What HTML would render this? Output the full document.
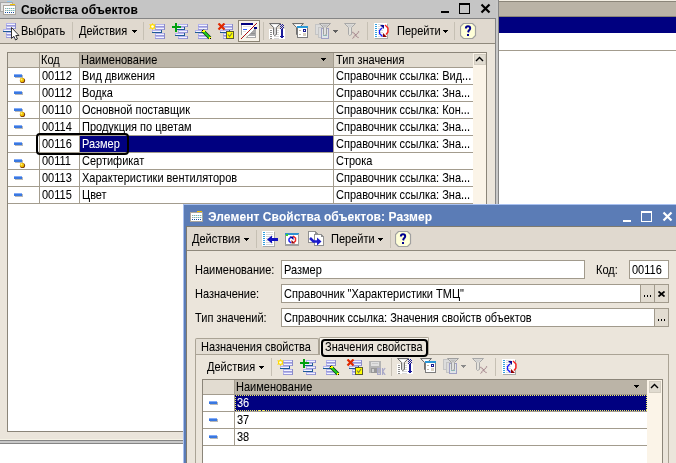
<!DOCTYPE html>
<html><head><meta charset="utf-8"><style>
html,body{margin:0;padding:0;width:676px;height:463px;overflow:hidden;background:#fff}
div{position:absolute;box-sizing:border-box}
.t{white-space:pre;will-change:transform;-webkit-text-stroke:0.05px currentColor}
</style></head><body>
<div style="left:0px;top:0px;width:676px;height:463px;background:#ffffff;"></div>
<div style="left:499px;top:0px;width:177px;height:1px;background:#f3eee3;"></div>
<div style="left:499px;top:1px;width:177px;height:1px;background:#8b8579;"></div>
<div style="left:499px;top:2px;width:177px;height:14px;background:#bab3a6;"></div>
<div style="left:499px;top:16px;width:177px;height:1px;background:#8b8579;"></div>
<div style="left:499px;top:17px;width:177px;height:16px;background:#000080;"></div>
<div style="left:499px;top:33px;width:177px;height:17px;background:#ffffff;"></div>
<div style="left:499px;top:50px;width:177px;height:1px;background:#a39c8e;"></div>
<div style="left:0px;top:0px;width:498px;height:18px;background:#c5c5c5;"></div>
<div style="left:498px;top:0px;width:1px;height:444px;background:#858585;"></div>
<div style="left:496px;top:0px;width:2px;height:443px;background:#c8c8c8;"></div>
<div style="left:0px;top:18px;width:495px;height:1px;background:#858585;"></div>
<div style="left:495px;top:18px;width:1px;height:423px;background:#858585;"></div>
<div style="left:0px;top:440px;width:496px;height:1px;background:#858585;"></div>
<div style="left:0px;top:441px;width:498px;height:2px;background:#c8c8c8;"></div>
<div style="left:0px;top:443px;width:499px;height:1px;background:#858585;"></div>
<div style="left:0px;top:19px;width:495px;height:24px;background:#e0d9cf;"></div>
<div style="left:0px;top:43px;width:495px;height:1px;background:#8f897c;"></div>
<div style="left:0px;top:44px;width:495px;height:396px;background:#ebe5db;"></div>
<div style="left:0px;top:439px;width:495px;height:1px;background:#f6f3e6;"></div>
<svg style="position:absolute;left:0px;top:0px" width="18" height="18" viewBox="0 0 18 18" shape-rendering="crispEdges"><rect x="0" y="2" width="13" height="10" fill="#a8a8a8"/><rect x="1" y="3" width="11" height="8" fill="#e4e4e4"/><rect x="7" y="1" width="5" height="1" fill="#90c8f0"/><rect x="3" y="5" width="13" height="10" fill="#a8a49c"/><rect x="4" y="6" width="11" height="8" fill="#ffffff"/><rect x="10" y="4" width="5" height="1" fill="#f0c000"/><rect x="5" y="8" width="1" height="1" fill="#a0a0a0"/><rect x="6" y="8" width="1" height="1" fill="#a8f4f4"/><rect x="7" y="8" width="1" height="1" fill="#a0a0a0"/><rect x="8" y="8" width="1" height="1" fill="#a8f4f4"/><rect x="9" y="8" width="1" height="1" fill="#a0a0a0"/><rect x="10" y="8" width="1" height="1" fill="#a8f4f4"/><rect x="11" y="8" width="1" height="1" fill="#a0a0a0"/><rect x="12" y="8" width="1" height="1" fill="#a8f4f4"/><rect x="13" y="8" width="1" height="1" fill="#a0a0a0"/><rect x="14" y="8" width="1" height="1" fill="#a8f4f4"/><rect x="5" y="10" width="1" height="1" fill="#a0a0a0"/><rect x="6" y="10" width="1" height="1" fill="#a8f4f4"/><rect x="7" y="10" width="1" height="1" fill="#a0a0a0"/><rect x="8" y="10" width="1" height="1" fill="#a8f4f4"/><rect x="9" y="10" width="1" height="1" fill="#a0a0a0"/><rect x="10" y="10" width="1" height="1" fill="#a8f4f4"/><rect x="11" y="10" width="1" height="1" fill="#a0a0a0"/><rect x="12" y="10" width="1" height="1" fill="#a8f4f4"/><rect x="13" y="10" width="1" height="1" fill="#a0a0a0"/><rect x="14" y="10" width="1" height="1" fill="#a8f4f4"/><rect x="5" y="12" width="1" height="1" fill="#1a50a0"/><rect x="7" y="12" width="1" height="1" fill="#1a50a0"/><rect x="9" y="12" width="1" height="1" fill="#1a50a0"/><rect x="11" y="12" width="1" height="1" fill="#1a50a0"/><rect x="13" y="12" width="1" height="1" fill="#1a50a0"/></svg>
<div class="t" style="left:21px;top:3px;font:bold 12px/14px 'Liberation Sans',sans-serif;color:#000;">Свойства объектов</div>
<div style="left:441px;top:11px;width:8px;height:2px;background:#000;"></div>
<svg style="position:absolute;left:459px;top:3px" width="11" height="11" viewBox="0 0 11 11" shape-rendering="crispEdges"><rect x="0.5" y="0.5" width="10" height="10" fill="none" stroke="#000" stroke-width="1"/><rect x="0" y="0" width="11" height="2" fill="#000"/></svg>
<svg style="position:absolute;left:480px;top:3px" width="11" height="11" viewBox="0 0 11 11" shape-rendering="crispEdges"><path d="M1.5 1.5 L9.5 9.5 M9.5 1.5 L1.5 9.5" stroke="#000" stroke-width="2.2" fill="none" shape-rendering="geometricPrecision"/></svg>
<svg style="position:absolute;left:3px;top:23px" width="18" height="18" viewBox="0 0 18 18" shape-rendering="crispEdges"><rect x="3" y="0" width="10" height="3" fill="#b4b4ee"/><rect x="4" y="1" width="8" height="1" fill="#f4f4ff"/><rect x="3" y="2" width="10" height="1" fill="#9a9ad8"/><rect x="12" y="0" width="1" height="3" fill="#8c8cc8"/><rect x="3" y="3" width="10" height="3" fill="#b4b4ee"/><rect x="4" y="4" width="8" height="1" fill="#f4f4ff"/><rect x="3" y="5" width="10" height="1" fill="#9a9ad8"/><rect x="12" y="3" width="1" height="3" fill="#8c8cc8"/><rect x="3" y="9" width="10" height="3" fill="#b4b4ee"/><rect x="4" y="10" width="8" height="1" fill="#f4f4ff"/><rect x="3" y="11" width="10" height="1" fill="#9a9ad8"/><rect x="12" y="9" width="1" height="3" fill="#8c8cc8"/><rect x="3" y="12" width="10" height="3" fill="#b4b4ee"/><rect x="4" y="13" width="8" height="1" fill="#f4f4ff"/><rect x="3" y="14" width="10" height="1" fill="#9a9ad8"/><rect x="12" y="12" width="1" height="3" fill="#8c8cc8"/><rect x="0" y="6" width="9" height="3" fill="#b4b4ee"/><rect x="1" y="7" width="7" height="1" fill="#f4f4ff"/><rect x="0" y="8" width="9" height="1" fill="#1f5a94"/><rect x="8" y="6" width="1" height="3" fill="#1f5a94"/><path d="M8.5 4.5 L8.5 15.5 L10.8 13.2 L12.6 17 L14.4 16 L12.8 12.5 L16 12.5 Z" fill="#fff" stroke="#303030" stroke-width="1" shape-rendering="geometricPrecision"/></svg>
<div class="t" style="left:21px;top:25px;font:11px/13px 'Liberation Sans',sans-serif;color:#000;transform:scaleY(1.125);transform-origin:0 10px;">Выбрать</div>
<div style="left:72px;top:22px;width:1px;height:18px;background:#c6c0b4;"></div>
<div class="t" style="left:79px;top:25px;font:11px/13px 'Liberation Sans',sans-serif;color:#000;transform:scaleY(1.125);transform-origin:0 10px;">Действия</div>
<svg style="position:absolute;left:132px;top:30px" width="5" height="3" viewBox="0 0 5 3" shape-rendering="crispEdges"><rect x="0" y="0" width="5" height="1" fill="#000"/><rect x="1" y="1" width="3" height="1" fill="#000"/><rect x="2" y="2" width="1" height="1" fill="#000"/></svg>
<div style="left:143px;top:22px;width:1px;height:18px;background:#c6c0b4;"></div>
<svg style="position:absolute;left:149px;top:23px" width="17" height="17" viewBox="0 0 17 17" shape-rendering="crispEdges"><rect x="6" y="1" width="10" height="3" fill="#b4b4ee"/><rect x="7" y="2" width="8" height="1" fill="#f4f4ff"/><rect x="6" y="3" width="10" height="1" fill="#9a9ad8"/><rect x="15" y="1" width="1" height="3" fill="#8c8cc8"/><rect x="6" y="4" width="10" height="3" fill="#b4b4ee"/><rect x="7" y="5" width="8" height="1" fill="#f4f4ff"/><rect x="6" y="6" width="10" height="1" fill="#9a9ad8"/><rect x="15" y="4" width="1" height="3" fill="#8c8cc8"/><rect x="6" y="10" width="10" height="3" fill="#b4b4ee"/><rect x="7" y="11" width="8" height="1" fill="#f4f4ff"/><rect x="6" y="12" width="10" height="1" fill="#9a9ad8"/><rect x="15" y="10" width="1" height="3" fill="#8c8cc8"/><rect x="6" y="13" width="10" height="3" fill="#b4b4ee"/><rect x="7" y="14" width="8" height="1" fill="#f4f4ff"/><rect x="6" y="15" width="10" height="1" fill="#9a9ad8"/><rect x="15" y="13" width="1" height="3" fill="#8c8cc8"/><rect x="3" y="7" width="10" height="3" fill="#b4b4ee"/><rect x="4" y="8" width="8" height="1" fill="#f4f4ff"/><rect x="3" y="9" width="10" height="1" fill="#1f5a94"/><rect x="12" y="7" width="1" height="3" fill="#1f5a94"/><path d="M3.5 -0.2 L4.5 2 L6.7 1 L5.6 3.5 L6.7 6 L4.5 5 L3.5 7.2 L2.5 5 L0.3 6 L1.4 3.5 L0.3 1 L2.5 2 Z" fill="#ffcc00" shape-rendering="geometricPrecision"/><circle cx="3.5" cy="3.5" r="2.4" fill="#ffe000" shape-rendering="geometricPrecision"/><circle cx="3.5" cy="3.5" r="1.3" fill="#ffffff" shape-rendering="geometricPrecision"/></svg>
<svg style="position:absolute;left:172px;top:23px" width="17" height="17" viewBox="0 0 17 17" shape-rendering="crispEdges"><rect x="6" y="1" width="10" height="3" fill="#b4b4ee"/><rect x="7" y="2" width="8" height="1" fill="#f4f4ff"/><rect x="6" y="3" width="10" height="1" fill="#9a9ad8"/><rect x="15" y="1" width="1" height="3" fill="#8c8cc8"/><rect x="3" y="4" width="10" height="3" fill="#b4b4ee"/><rect x="4" y="5" width="8" height="1" fill="#f4f4ff"/><rect x="3" y="6" width="10" height="1" fill="#1f5a94"/><rect x="12" y="4" width="1" height="3" fill="#1f5a94"/><rect x="6" y="7" width="10" height="3" fill="#b4b4ee"/><rect x="7" y="8" width="8" height="1" fill="#f4f4ff"/><rect x="6" y="9" width="10" height="1" fill="#9a9ad8"/><rect x="15" y="7" width="1" height="3" fill="#8c8cc8"/><rect x="3" y="10" width="10" height="3" fill="#b4b4ee"/><rect x="4" y="11" width="8" height="1" fill="#f4f4ff"/><rect x="3" y="12" width="10" height="1" fill="#1f5a94"/><rect x="12" y="10" width="1" height="3" fill="#1f5a94"/><rect x="6" y="13" width="10" height="3" fill="#b4b4ee"/><rect x="7" y="14" width="8" height="1" fill="#f4f4ff"/><rect x="6" y="15" width="10" height="1" fill="#9a9ad8"/><rect x="15" y="13" width="1" height="3" fill="#8c8cc8"/><rect x="0" y="3" width="9" height="2" fill="#00a010"/><rect x="3" y="0" width="2" height="9" fill="#00a010"/></svg>
<svg style="position:absolute;left:195px;top:23px" width="17" height="17" viewBox="0 0 17 17" shape-rendering="crispEdges"><rect x="3" y="1" width="10" height="3" fill="#b4b4ee"/><rect x="4" y="2" width="8" height="1" fill="#f4f4ff"/><rect x="3" y="3" width="10" height="1" fill="#9a9ad8"/><rect x="12" y="1" width="1" height="3" fill="#8c8cc8"/><rect x="3" y="4" width="10" height="3" fill="#b4b4ee"/><rect x="4" y="5" width="8" height="1" fill="#f4f4ff"/><rect x="3" y="6" width="10" height="1" fill="#9a9ad8"/><rect x="12" y="4" width="1" height="3" fill="#8c8cc8"/><rect x="3" y="10" width="10" height="3" fill="#b4b4ee"/><rect x="4" y="11" width="8" height="1" fill="#f4f4ff"/><rect x="3" y="12" width="10" height="1" fill="#9a9ad8"/><rect x="12" y="10" width="1" height="3" fill="#8c8cc8"/><rect x="3" y="13" width="10" height="3" fill="#b4b4ee"/><rect x="4" y="14" width="8" height="1" fill="#f4f4ff"/><rect x="3" y="15" width="10" height="1" fill="#9a9ad8"/><rect x="12" y="13" width="1" height="3" fill="#8c8cc8"/><rect x="0" y="7" width="10" height="3" fill="#b4b4ee"/><rect x="1" y="8" width="8" height="1" fill="#f4f4ff"/><rect x="0" y="9" width="10" height="1" fill="#1f5a94"/><rect x="9" y="7" width="1" height="3" fill="#1f5a94"/><path d="M7.5 7.5 L15 15" stroke="#104010" stroke-width="3.6" shape-rendering="geometricPrecision"/><path d="M8 8 L14.5 14.5" stroke="#20d020" stroke-width="2" shape-rendering="geometricPrecision"/><rect x="7" y="7" width="3" height="2" fill="#ffff00"/><rect x="7" y="7" width="1" height="1" fill="#000"/><rect x="14" y="14" width="2" height="2" fill="#ffff00"/><rect x="15" y="15" width="1" height="1" fill="#000"/></svg>
<svg style="position:absolute;left:217px;top:23px" width="18" height="17" viewBox="0 0 18 17" shape-rendering="crispEdges"><rect x="6" y="1" width="10" height="3" fill="#b4b4ee"/><rect x="7" y="2" width="8" height="1" fill="#f4f4ff"/><rect x="6" y="3" width="10" height="1" fill="#9a9ad8"/><rect x="15" y="1" width="1" height="3" fill="#8c8cc8"/><rect x="6" y="4" width="10" height="3" fill="#b4b4ee"/><rect x="7" y="5" width="8" height="1" fill="#f4f4ff"/><rect x="6" y="6" width="10" height="1" fill="#9a9ad8"/><rect x="15" y="4" width="1" height="3" fill="#8c8cc8"/><rect x="6" y="10" width="10" height="3" fill="#b4b4ee"/><rect x="7" y="11" width="8" height="1" fill="#f4f4ff"/><rect x="6" y="12" width="10" height="1" fill="#9a9ad8"/><rect x="15" y="10" width="1" height="3" fill="#8c8cc8"/><rect x="6" y="13" width="10" height="3" fill="#b4b4ee"/><rect x="7" y="14" width="8" height="1" fill="#f4f4ff"/><rect x="6" y="15" width="10" height="1" fill="#9a9ad8"/><rect x="15" y="13" width="1" height="3" fill="#8c8cc8"/><rect x="3" y="7" width="10" height="3" fill="#b4b4ee"/><rect x="4" y="8" width="8" height="1" fill="#f4f4ff"/><rect x="3" y="9" width="10" height="1" fill="#1f5a94"/><rect x="12" y="7" width="1" height="3" fill="#1f5a94"/><path d="M1.5 0.5 L7.5 6.5 M7.5 0.5 L1.5 6.5" stroke="#e02800" stroke-width="2.2" shape-rendering="geometricPrecision"/><rect x="9" y="8" width="8" height="8" fill="#5a5a30"/><rect x="10" y="9" width="6" height="6" fill="#ffff00"/><path d="M11 11.5 L12.6 13.5 L15 10" stroke="#808040" stroke-width="1.2" fill="none" shape-rendering="geometricPrecision"/></svg>
<div style="left:238px;top:20px;width:22px;height:22px;background:#8c8474;"></div>
<div style="left:239px;top:21px;width:20px;height:20px;background:#f7f2e8;"></div>
<svg style="position:absolute;left:239px;top:21px" width="20" height="20" viewBox="0 0 20 20" shape-rendering="crispEdges"><rect x="2" y="2" width="12" height="12" fill="#ffffff"/><rect x="2" y="2" width="12" height="2" fill="#000080"/><rect x="2" y="4" width="1" height="10" fill="#a0a0a0"/><rect x="4" y="5" width="8" height="1" fill="#e0e0e0"/><rect x="4" y="8" width="4" height="1" fill="#3060ff"/><rect x="4" y="10" width="3" height="1" fill="#e0e0e0"/><path d="M17 6 L17 17 L6 17 Z" fill="#a8a8a8"/><rect x="15" y="6" width="3" height="2" fill="#000080"/><rect x="9" y="15" width="7" height="1" fill="#ffffff"/><rect x="12" y="12" width="4" height="1" fill="#909090"/><rect x="3" y="17" width="1" height="1" fill="#e8ffff"/><rect x="2" y="17" width="1" height="1" fill="#c00000"/><rect x="4" y="16" width="1" height="1" fill="#e8ffff"/><rect x="3" y="16" width="1" height="1" fill="#a02020"/><rect x="5" y="15" width="1" height="1" fill="#e8ffff"/><rect x="4" y="15" width="1" height="1" fill="#c00000"/><rect x="6" y="14" width="1" height="1" fill="#e8ffff"/><rect x="5" y="14" width="1" height="1" fill="#a02020"/><rect x="7" y="13" width="1" height="1" fill="#e8ffff"/><rect x="6" y="13" width="1" height="1" fill="#c00000"/><rect x="8" y="12" width="1" height="1" fill="#e8ffff"/><rect x="7" y="12" width="1" height="1" fill="#a02020"/><rect x="9" y="11" width="1" height="1" fill="#e8ffff"/><rect x="8" y="11" width="1" height="1" fill="#c00000"/><rect x="10" y="10" width="1" height="1" fill="#e8ffff"/><rect x="9" y="10" width="1" height="1" fill="#a02020"/><rect x="11" y="9" width="1" height="1" fill="#e8ffff"/><rect x="10" y="9" width="1" height="1" fill="#c00000"/><rect x="12" y="8" width="1" height="1" fill="#e8ffff"/><rect x="11" y="8" width="1" height="1" fill="#a02020"/><rect x="13" y="7" width="1" height="1" fill="#e8ffff"/><rect x="12" y="7" width="1" height="1" fill="#c00000"/><rect x="14" y="6" width="1" height="1" fill="#e8ffff"/><rect x="13" y="6" width="1" height="1" fill="#a02020"/><rect x="15" y="5" width="1" height="1" fill="#e8ffff"/><rect x="14" y="5" width="1" height="1" fill="#c00000"/><rect x="16" y="4" width="1" height="1" fill="#e8ffff"/><rect x="15" y="4" width="1" height="1" fill="#a02020"/><rect x="17" y="3" width="1" height="1" fill="#e8ffff"/><rect x="16" y="3" width="1" height="1" fill="#c00000"/><rect x="18" y="2" width="1" height="1" fill="#e8ffff"/><rect x="17" y="2" width="1" height="1" fill="#a02020"/></svg>
<div style="left:263px;top:22px;width:1px;height:18px;background:#c6c0b4;"></div>
<svg style="position:absolute;left:269px;top:23px" width="17" height="17" viewBox="0 0 17 17" shape-rendering="crispEdges"><rect x="0" y="6" width="16" height="10" fill="#ffffff"/><rect x="1" y="7" width="2" height="1" fill="#8a8a8a"/><rect x="5" y="7" width="5" height="1" fill="#d8d8d8"/><rect x="1" y="9" width="2" height="1" fill="#8a8a8a"/><rect x="5" y="9" width="5" height="1" fill="#d8d8d8"/><rect x="1" y="11" width="2" height="1" fill="#8a8a8a"/><rect x="5" y="11" width="5" height="1" fill="#d8d8d8"/><rect x="1" y="13" width="2" height="1" fill="#8a8a8a"/><rect x="5" y="13" width="5" height="1" fill="#d8d8d8"/><rect x="1" y="15" width="2" height="1" fill="#8a8a8a"/><rect x="5" y="15" width="5" height="1" fill="#d8d8d8"/><path d="M0.5 0.5 H11.5 L7.5 4.5 V11.5 L5.5 12.5 L4.5 11.5 V4.5 Z" fill="#d8d8d8" stroke="#707070" stroke-width="1" shape-rendering="geometricPrecision"/><path d="M2.5 1.5 H9.5 L6.5 4.5 H5.5 Z" fill="#ffffff" shape-rendering="geometricPrecision"/><rect x="12" y="6" width="2" height="8" fill="#1a1a9a"/><path d="M10 12.5 H16 L13 16 Z" fill="#1a1a9a"/><rect x="11" y="1" width="1" height="1" fill="#1a1a9a"/><rect x="13" y="1" width="1" height="1" fill="#1a1a9a"/><rect x="12" y="2" width="1" height="1" fill="#1a1a9a"/><rect x="14" y="2" width="1" height="1" fill="#1a1a9a"/><rect x="11" y="3" width="1" height="1" fill="#1a1a9a"/><rect x="13" y="3" width="1" height="1" fill="#1a1a9a"/><rect x="12" y="4" width="1" height="1" fill="#1a1a9a"/><rect x="14" y="4" width="1" height="1" fill="#1a1a9a"/><rect x="11" y="5" width="1" height="1" fill="#1a1a9a"/><rect x="13" y="5" width="1" height="1" fill="#1a1a9a"/></svg>
<svg style="position:absolute;left:292px;top:23px" width="17" height="17" viewBox="0 0 17 17" shape-rendering="crispEdges"><path d="M0.5 0.5 H11.5 L7.5 4.5 V11.5 L5.5 12.5 L4.5 11.5 V4.5 Z" fill="#d8d8d8" stroke="#707070" stroke-width="1" shape-rendering="geometricPrecision"/><path d="M2.5 1.5 H9.5 L6.5 4.5 H5.5 Z" fill="#ffffff" shape-rendering="geometricPrecision"/><rect x="5" y="3" width="11" height="12" fill="#7c7c7c"/><rect x="6" y="5" width="9" height="9" fill="#ffffff"/><rect x="5" y="3" width="11" height="2" fill="#2898d8"/><rect x="11" y="6" width="3" height="3" fill="#1a1a90"/><rect x="12" y="7" width="1" height="1" fill="#ffffff"/><rect x="11" y="10" width="3" height="3" fill="#d8d0c0"/><rect x="7" y="7" width="2" height="1" fill="#c0b8a8"/><rect x="7" y="11" width="2" height="1" fill="#c0b8a8"/></svg>
<svg style="position:absolute;left:314px;top:23px" width="18" height="17" viewBox="0 0 18 17" shape-rendering="crispEdges"><rect x="1" y="1" width="8" height="11" fill="#c4c4c4"/><rect x="2" y="2" width="6" height="9" fill="#dcdcdc"/><rect x="4" y="4" width="8" height="11" fill="#c4c4c4"/><rect x="5" y="5" width="6" height="9" fill="#dcdcdc"/><rect x="7" y="5" width="8" height="11" fill="#a0a0c4"/><rect x="8" y="6" width="6" height="9" fill="#e0e4e8"/><rect x="9" y="8" width="4" height="1" fill="#80c0c0"/><rect x="9" y="10" width="4" height="1" fill="#80c0c0"/><rect x="9" y="12" width="4" height="1" fill="#80c0c0"/><path d="M5.5 0.5 H16.5 L12.5 4.5 V11.5 L10.5 12.5 L9.5 11.5 V4.5 Z" fill="#e0e0e0" stroke="#a0a0a0" stroke-width="1" shape-rendering="geometricPrecision"/><path d="M7.5 1.5 H14.5 L11.5 4.5 H10.5 Z" fill="#c0c0c0" shape-rendering="geometricPrecision"/></svg>
<svg style="position:absolute;left:333px;top:30px" width="5" height="3" viewBox="0 0 5 3" shape-rendering="crispEdges"><rect x="0" y="0" width="5" height="1" fill="#606060"/><rect x="1" y="1" width="3" height="1" fill="#606060"/><rect x="2" y="2" width="1" height="1" fill="#606060"/></svg>
<svg style="position:absolute;left:344px;top:23px" width="17" height="17" viewBox="0 0 17 17" shape-rendering="crispEdges"><path d="M0.5 0.5 H11.5 L7.5 4.5 V11.5 L5.5 12.5 L4.5 11.5 V4.5 Z" fill="#e4e2dc" stroke="#a8a8a8" stroke-width="1" shape-rendering="geometricPrecision"/><path d="M2.5 1.5 H9.5 L6.5 4.5 H5.5 Z" fill="#d0d0d0" shape-rendering="geometricPrecision"/><path d="M8.5 9 L14.5 15 M15 8.5 L8.5 15.5" stroke="#a08088" stroke-width="1.2" stroke-dasharray="1.2 0.6" shape-rendering="geometricPrecision"/></svg>
<div style="left:367px;top:22px;width:1px;height:18px;background:#c6c0b4;"></div>
<svg style="position:absolute;left:373px;top:22px" width="18" height="18" viewBox="0 0 18 18" shape-rendering="crispEdges"><rect x="1" y="1" width="13" height="15" fill="#ffffff"/><rect x="14" y="2" width="1" height="15" fill="#a8a8a8"/><rect x="2" y="16" width="13" height="1" fill="#a8a8a8"/><rect x="2" y="2" width="2" height="1" fill="#30a0e0"/><rect x="5" y="2" width="5" height="1" fill="#dcdcdc"/><rect x="2" y="4" width="2" height="1" fill="#30a0e0"/><rect x="5" y="4" width="5" height="1" fill="#dcdcdc"/><rect x="2" y="6" width="2" height="1" fill="#30a0e0"/><rect x="5" y="6" width="5" height="1" fill="#dcdcdc"/><rect x="2" y="8" width="2" height="1" fill="#30a0e0"/><rect x="5" y="8" width="5" height="1" fill="#dcdcdc"/><rect x="2" y="10" width="2" height="1" fill="#30a0e0"/><rect x="5" y="10" width="5" height="1" fill="#dcdcdc"/><rect x="2" y="12" width="2" height="1" fill="#30a0e0"/><rect x="5" y="12" width="5" height="1" fill="#dcdcdc"/><rect x="2" y="14" width="2" height="1" fill="#30a0e0"/><rect x="5" y="14" width="5" height="1" fill="#dcdcdc"/><path d="M9 6 L6.5 8.5 L6.5 11.5 L9.5 14.5" stroke="#1a1aff" stroke-width="1.3" fill="none" shape-rendering="geometricPrecision"/><path d="M7 3 L11 3 L11 7 Z" fill="#0a0a90" shape-rendering="geometricPrecision"/><path d="M12 3 L15 6 L15 10 L13 12.5" stroke="#ff1a1a" stroke-width="1.3" fill="none" shape-rendering="geometricPrecision"/><path d="M10 11 L10 15 L14 15 Z" fill="#900000" shape-rendering="geometricPrecision"/></svg>
<div class="t" style="left:397px;top:25px;font:11px/13px 'Liberation Sans',sans-serif;color:#000;transform:scaleY(1.125);transform-origin:0 10px;">Перейти</div>
<svg style="position:absolute;left:443px;top:30px" width="5" height="3" viewBox="0 0 5 3" shape-rendering="crispEdges"><rect x="0" y="0" width="5" height="1" fill="#000"/><rect x="1" y="1" width="3" height="1" fill="#000"/><rect x="2" y="2" width="1" height="1" fill="#000"/></svg>
<div style="left:454px;top:22px;width:1px;height:18px;background:#c6c0b4;"></div>
<svg style="position:absolute;left:460px;top:23px" width="17" height="16" viewBox="0 0 17 16" shape-rendering="crispEdges"><path d="M3.5 0.5 L12.5 0.5 L15.5 3.5 L15.5 12.5 L12.5 15.5 L3.5 15.5 L0.5 12.5 L0.5 3.5 Z" fill="#ffffd8" stroke="#a0a0a0" stroke-width="1.2" shape-rendering="geometricPrecision"/><path d="M5.9 5.6 Q5.9 3.3 8 3.3 Q10.2 3.3 10.2 5.3 Q10.2 6.7 8.7 7.6 L8.1 9.4" stroke="#000090" stroke-width="2" fill="none" shape-rendering="geometricPrecision"/><rect x="7" y="11" width="2" height="2" fill="#000090"/></svg>
<div style="left:7px;top:52px;width:480px;height:380px;background:#8b8579;"></div>
<div style="left:8px;top:53px;width:478px;height:378px;background:#ffffff;"></div>
<div style="left:473px;top:53px;width:13px;height:378px;background:#fbf4e8;"></div>
<div style="left:474px;top:54px;width:12px;height:11px;background:#d2ccc0;"></div>
<div style="left:475px;top:55px;width:10px;height:9px;background:#e0dbd0;"></div>
<svg style="position:absolute;left:475px;top:56px" width="9" height="6" viewBox="0 0 9 6" shape-rendering="crispEdges"><path d="M1 5 L4.5 1.5 L8 5" stroke="#000" stroke-width="1.4" fill="none" shape-rendering="geometricPrecision"/></svg>
<div style="left:8px;top:53px;width:465px;height:14px;background:#e2dcd1;"></div>
<div style="left:80px;top:53px;width:253px;height:14px;background:#bbb4a7;"></div>
<div style="left:8px;top:67px;width:465px;height:1px;background:#a39c8e;"></div>
<div style="left:39px;top:53px;width:1px;height:151px;background:#a39c8e;"></div>
<div style="left:79px;top:53px;width:1px;height:151px;background:#a39c8e;"></div>
<div style="left:333px;top:53px;width:1px;height:151px;background:#a39c8e;"></div>
<div class="t" style="left:41px;top:54px;font:11px/13px 'Liberation Sans',sans-serif;color:#000;transform:scaleY(1.125);transform-origin:0 10px;">Код</div>
<div class="t" style="left:81px;top:54px;font:11px/13px 'Liberation Sans',sans-serif;color:#000;transform:scaleY(1.125);transform-origin:0 10px;">Наименование</div>
<div class="t" style="left:336px;top:54px;font:11px/13px 'Liberation Sans',sans-serif;color:#000;transform:scaleY(1.125);transform-origin:0 10px;">Тип значения</div>
<svg style="position:absolute;left:321px;top:58px" width="5" height="3" viewBox="0 0 5 3" shape-rendering="crispEdges"><rect x="0" y="0" width="5" height="1" fill="#000"/><rect x="1" y="1" width="3" height="1" fill="#000"/><rect x="2" y="2" width="1" height="1" fill="#000"/></svg>
<div style="left:8px;top:84px;width:465px;height:1px;background:#a39c8e;"></div>
<svg style="position:absolute;left:14px;top:74px" width="12" height="10" viewBox="0 0 12 10" shape-rendering="crispEdges"><rect x="1" y="1" width="8" height="3" fill="#b8b8b8"/><rect x="0" y="0" width="8" height="3" fill="#3a78e0"/><rect x="0" y="0" width="8" height="1" fill="#80aaf8"/><circle cx="8.5" cy="6.5" r="2.6" fill="#7a3a10" shape-rendering="geometricPrecision"/><circle cx="8" cy="6" r="2.2" fill="#f0c000" shape-rendering="geometricPrecision"/><circle cx="7.5" cy="5.5" r="0.9" fill="#fff080" shape-rendering="geometricPrecision"/></svg>
<div class="t" style="left:42px;top:70px;font:11px/13px 'Liberation Sans',sans-serif;color:#000;transform:scaleY(1.125);transform-origin:0 10px;">00112</div>
<div class="t" style="left:82px;top:70px;font:11px/13px 'Liberation Sans',sans-serif;color:#000;transform:scaleY(1.125);transform-origin:0 10px;">Вид движения</div>
<div class="t" style="left:336px;top:70px;font:11px/13px 'Liberation Sans',sans-serif;color:#000;transform:scaleY(1.125);transform-origin:0 10px;">Справочник ссылка: Вид...</div>
<div style="left:8px;top:101px;width:465px;height:1px;background:#a39c8e;"></div>
<svg style="position:absolute;left:14px;top:91px" width="12" height="10" viewBox="0 0 12 10" shape-rendering="crispEdges"><rect x="1" y="1" width="8" height="3" fill="#b8b8b8"/><rect x="0" y="0" width="8" height="3" fill="#3a78e0"/><rect x="0" y="0" width="8" height="1" fill="#80aaf8"/></svg>
<div class="t" style="left:42px;top:87px;font:11px/13px 'Liberation Sans',sans-serif;color:#000;transform:scaleY(1.125);transform-origin:0 10px;">00112</div>
<div class="t" style="left:82px;top:87px;font:11px/13px 'Liberation Sans',sans-serif;color:#000;transform:scaleY(1.125);transform-origin:0 10px;">Водка</div>
<div class="t" style="left:336px;top:87px;font:11px/13px 'Liberation Sans',sans-serif;color:#000;transform:scaleY(1.125);transform-origin:0 10px;">Справочник ссылка: Зна...</div>
<div style="left:8px;top:118px;width:465px;height:1px;background:#a39c8e;"></div>
<svg style="position:absolute;left:14px;top:108px" width="12" height="10" viewBox="0 0 12 10" shape-rendering="crispEdges"><rect x="1" y="1" width="8" height="3" fill="#b8b8b8"/><rect x="0" y="0" width="8" height="3" fill="#3a78e0"/><rect x="0" y="0" width="8" height="1" fill="#80aaf8"/><circle cx="8.5" cy="6.5" r="2.6" fill="#7a3a10" shape-rendering="geometricPrecision"/><circle cx="8" cy="6" r="2.2" fill="#f0c000" shape-rendering="geometricPrecision"/><circle cx="7.5" cy="5.5" r="0.9" fill="#fff080" shape-rendering="geometricPrecision"/></svg>
<div class="t" style="left:42px;top:104px;font:11px/13px 'Liberation Sans',sans-serif;color:#000;transform:scaleY(1.125);transform-origin:0 10px;">00110</div>
<div class="t" style="left:82px;top:104px;font:11px/13px 'Liberation Sans',sans-serif;color:#000;transform:scaleY(1.125);transform-origin:0 10px;">Основной поставщик</div>
<div class="t" style="left:336px;top:104px;font:11px/13px 'Liberation Sans',sans-serif;color:#000;transform:scaleY(1.125);transform-origin:0 10px;">Справочник ссылка: Кон...</div>
<div style="left:8px;top:135px;width:465px;height:1px;background:#a39c8e;"></div>
<svg style="position:absolute;left:14px;top:125px" width="12" height="10" viewBox="0 0 12 10" shape-rendering="crispEdges"><rect x="1" y="1" width="8" height="3" fill="#b8b8b8"/><rect x="0" y="0" width="8" height="3" fill="#3a78e0"/><rect x="0" y="0" width="8" height="1" fill="#80aaf8"/></svg>
<div class="t" style="left:42px;top:121px;font:11px/13px 'Liberation Sans',sans-serif;color:#000;transform:scaleY(1.125);transform-origin:0 10px;">00114</div>
<div class="t" style="left:82px;top:121px;font:11px/13px 'Liberation Sans',sans-serif;color:#000;transform:scaleY(1.125);transform-origin:0 10px;">Продукция по цветам</div>
<div class="t" style="left:336px;top:121px;font:11px/13px 'Liberation Sans',sans-serif;color:#000;transform:scaleY(1.125);transform-origin:0 10px;">Справочник ссылка: Зна...</div>
<div style="left:8px;top:152px;width:465px;height:1px;background:#a39c8e;"></div>
<div style="left:80px;top:136px;width:253px;height:16px;background:#000080;"></div>
<svg style="position:absolute;left:14px;top:142px" width="12" height="10" viewBox="0 0 12 10" shape-rendering="crispEdges"><rect x="1" y="1" width="8" height="3" fill="#b8b8b8"/><rect x="0" y="0" width="8" height="3" fill="#3a78e0"/><rect x="0" y="0" width="8" height="1" fill="#80aaf8"/></svg>
<div class="t" style="left:42px;top:138px;font:11px/13px 'Liberation Sans',sans-serif;color:#000;transform:scaleY(1.125);transform-origin:0 10px;">00116</div>
<div class="t" style="left:82px;top:138px;font:11px/13px 'Liberation Sans',sans-serif;color:#fff;transform:scaleY(1.125);transform-origin:0 10px;">Размер</div>
<div class="t" style="left:336px;top:138px;font:11px/13px 'Liberation Sans',sans-serif;color:#000;transform:scaleY(1.125);transform-origin:0 10px;">Справочник ссылка: Зна...</div>
<div style="left:8px;top:169px;width:465px;height:1px;background:#a39c8e;"></div>
<svg style="position:absolute;left:14px;top:159px" width="12" height="10" viewBox="0 0 12 10" shape-rendering="crispEdges"><rect x="1" y="1" width="8" height="3" fill="#b8b8b8"/><rect x="0" y="0" width="8" height="3" fill="#3a78e0"/><rect x="0" y="0" width="8" height="1" fill="#80aaf8"/><circle cx="8.5" cy="6.5" r="2.6" fill="#7a3a10" shape-rendering="geometricPrecision"/><circle cx="8" cy="6" r="2.2" fill="#f0c000" shape-rendering="geometricPrecision"/><circle cx="7.5" cy="5.5" r="0.9" fill="#fff080" shape-rendering="geometricPrecision"/></svg>
<div class="t" style="left:42px;top:155px;font:11px/13px 'Liberation Sans',sans-serif;color:#000;transform:scaleY(1.125);transform-origin:0 10px;">00111</div>
<div class="t" style="left:82px;top:155px;font:11px/13px 'Liberation Sans',sans-serif;color:#000;transform:scaleY(1.125);transform-origin:0 10px;">Сертификат</div>
<div class="t" style="left:336px;top:155px;font:11px/13px 'Liberation Sans',sans-serif;color:#000;transform:scaleY(1.125);transform-origin:0 10px;">Строка</div>
<div style="left:8px;top:186px;width:465px;height:1px;background:#a39c8e;"></div>
<svg style="position:absolute;left:14px;top:176px" width="12" height="10" viewBox="0 0 12 10" shape-rendering="crispEdges"><rect x="1" y="1" width="8" height="3" fill="#b8b8b8"/><rect x="0" y="0" width="8" height="3" fill="#3a78e0"/><rect x="0" y="0" width="8" height="1" fill="#80aaf8"/></svg>
<div class="t" style="left:42px;top:172px;font:11px/13px 'Liberation Sans',sans-serif;color:#000;transform:scaleY(1.125);transform-origin:0 10px;">00113</div>
<div class="t" style="left:82px;top:172px;font:11px/13px 'Liberation Sans',sans-serif;color:#000;transform:scaleY(1.125);transform-origin:0 10px;">Характеристики вентиляторов</div>
<div class="t" style="left:336px;top:172px;font:11px/13px 'Liberation Sans',sans-serif;color:#000;transform:scaleY(1.125);transform-origin:0 10px;">Справочник ссылка: Зна...</div>
<div style="left:8px;top:203px;width:465px;height:1px;background:#a39c8e;"></div>
<svg style="position:absolute;left:14px;top:193px" width="12" height="10" viewBox="0 0 12 10" shape-rendering="crispEdges"><rect x="1" y="1" width="8" height="3" fill="#b8b8b8"/><rect x="0" y="0" width="8" height="3" fill="#3a78e0"/><rect x="0" y="0" width="8" height="1" fill="#80aaf8"/></svg>
<div class="t" style="left:42px;top:189px;font:11px/13px 'Liberation Sans',sans-serif;color:#000;transform:scaleY(1.125);transform-origin:0 10px;">00115</div>
<div class="t" style="left:82px;top:189px;font:11px/13px 'Liberation Sans',sans-serif;color:#000;transform:scaleY(1.125);transform-origin:0 10px;">Цвет</div>
<div class="t" style="left:336px;top:189px;font:11px/13px 'Liberation Sans',sans-serif;color:#000;transform:scaleY(1.125);transform-origin:0 10px;">Справочник ссылка: Зна...</div>
<div style="left:36px;top:133px;width:93px;height:22px;border:2px solid #000;border-radius:4px;background:transparent"></div>
<div style="left:183px;top:204px;width:493px;height:259px;background:#5b7cb6;"></div>
<div style="left:183px;top:204px;width:493px;height:1px;background:#a8c0f0;"></div>
<div style="left:183px;top:204px;width:1px;height:259px;background:#a8c0f0;"></div>
<div style="left:187px;top:227px;width:489px;height:236px;background:#ebe5db;"></div>
<div style="left:186px;top:226px;width:490px;height:1px;background:#7d7a70;"></div>
<div style="left:186px;top:226px;width:1px;height:237px;background:#7d7a70;"></div>
<div style="left:187px;top:227px;width:489px;height:23px;background:#e0d9cf;"></div>
<div style="left:187px;top:250px;width:489px;height:1px;background:#8f897c;"></div>
<svg style="position:absolute;left:190px;top:211px" width="14" height="12" viewBox="0 0 14 12" shape-rendering="crispEdges"><rect x="0" y="1" width="13" height="10" fill="#a8a49c"/><rect x="1" y="2" width="11" height="8" fill="#ffffff"/><rect x="7" y="0" width="5" height="1" fill="#f0c000"/><rect x="2" y="4" width="1" height="1" fill="#a0a0a0"/><rect x="3" y="4" width="1" height="1" fill="#a8f4f4"/><rect x="4" y="4" width="1" height="1" fill="#a0a0a0"/><rect x="5" y="4" width="1" height="1" fill="#a8f4f4"/><rect x="6" y="4" width="1" height="1" fill="#a0a0a0"/><rect x="7" y="4" width="1" height="1" fill="#a8f4f4"/><rect x="8" y="4" width="1" height="1" fill="#a0a0a0"/><rect x="9" y="4" width="1" height="1" fill="#a8f4f4"/><rect x="10" y="4" width="1" height="1" fill="#a0a0a0"/><rect x="11" y="4" width="1" height="1" fill="#a8f4f4"/><rect x="2" y="6" width="1" height="1" fill="#a0a0a0"/><rect x="3" y="6" width="1" height="1" fill="#a8f4f4"/><rect x="4" y="6" width="1" height="1" fill="#a0a0a0"/><rect x="5" y="6" width="1" height="1" fill="#a8f4f4"/><rect x="6" y="6" width="1" height="1" fill="#a0a0a0"/><rect x="7" y="6" width="1" height="1" fill="#a8f4f4"/><rect x="8" y="6" width="1" height="1" fill="#a0a0a0"/><rect x="9" y="6" width="1" height="1" fill="#a8f4f4"/><rect x="10" y="6" width="1" height="1" fill="#a0a0a0"/><rect x="11" y="6" width="1" height="1" fill="#a8f4f4"/><rect x="2" y="8" width="1" height="1" fill="#1a50a0"/><rect x="4" y="8" width="1" height="1" fill="#1a50a0"/><rect x="6" y="8" width="1" height="1" fill="#1a50a0"/><rect x="8" y="8" width="1" height="1" fill="#1a50a0"/><rect x="10" y="8" width="1" height="1" fill="#1a50a0"/></svg>
<div class="t" style="left:208px;top:210px;font:bold 12px/14px 'Liberation Sans',sans-serif;color:#fff;letter-spacing:0.08px">Элемент Свойства объектов: Размер</div>
<div style="left:623px;top:220px;width:8px;height:2px;background:#fff;"></div>
<svg style="position:absolute;left:641px;top:211px" width="11" height="11" viewBox="0 0 11 11" shape-rendering="crispEdges"><rect x="0.5" y="0.5" width="10" height="10" fill="none" stroke="#fff" stroke-width="1"/><rect x="0" y="0" width="11" height="2" fill="#fff"/></svg>
<svg style="position:absolute;left:662px;top:211px" width="11" height="11" viewBox="0 0 11 11" shape-rendering="crispEdges"><path d="M1.5 1.5 L9.5 9.5 M9.5 1.5 L1.5 9.5" stroke="#fff" stroke-width="2.2" fill="none" shape-rendering="geometricPrecision"/></svg>
<div class="t" style="left:192px;top:233px;font:11px/13px 'Liberation Sans',sans-serif;color:#000;transform:scaleY(1.125);transform-origin:0 10px;">Действия</div>
<svg style="position:absolute;left:244px;top:238px" width="5" height="3" viewBox="0 0 5 3" shape-rendering="crispEdges"><rect x="0" y="0" width="5" height="1" fill="#000"/><rect x="1" y="1" width="3" height="1" fill="#000"/><rect x="2" y="2" width="1" height="1" fill="#000"/></svg>
<div style="left:256px;top:230px;width:1px;height:18px;background:#c6c0b4;"></div>
<svg style="position:absolute;left:261px;top:230px" width="18" height="17" viewBox="0 0 18 17" shape-rendering="crispEdges"><rect x="1" y="1" width="12" height="15" fill="#fff"/><rect x="13" y="2" width="1" height="15" fill="#a8a8a8"/><rect x="2" y="16" width="12" height="1" fill="#a8a8a8"/><rect x="2" y="2" width="2" height="1" fill="#30a0e0"/><rect x="5" y="2" width="7" height="1" fill="#d8d8d8"/><rect x="2" y="4" width="2" height="1" fill="#30a0e0"/><rect x="5" y="4" width="7" height="1" fill="#d8d8d8"/><rect x="2" y="6" width="2" height="1" fill="#30a0e0"/><rect x="5" y="6" width="7" height="1" fill="#d8d8d8"/><rect x="2" y="8" width="2" height="1" fill="#30a0e0"/><rect x="5" y="8" width="7" height="1" fill="#d8d8d8"/><rect x="2" y="10" width="2" height="1" fill="#30a0e0"/><rect x="5" y="10" width="7" height="1" fill="#d8d8d8"/><rect x="2" y="12" width="2" height="1" fill="#30a0e0"/><rect x="5" y="12" width="7" height="1" fill="#d8d8d8"/><rect x="2" y="14" width="2" height="1" fill="#30a0e0"/><rect x="5" y="14" width="7" height="1" fill="#d8d8d8"/><rect x="10" y="8" width="7" height="3" fill="#1010c0"/><path d="M6 9.5 L11 5.5 L11 13.5 Z" fill="#1010c0" shape-rendering="geometricPrecision"/></svg>
<svg style="position:absolute;left:285px;top:233px" width="15" height="13" viewBox="0 0 15 13" shape-rendering="crispEdges"><rect x="0" y="0" width="14" height="12" fill="#909090"/><rect x="1" y="2" width="12" height="9" fill="#ffffff"/><rect x="0" y="0" width="14" height="2" fill="#3090d0"/><rect x="1" y="1" width="2" height="2" fill="#30d030"/><rect x="13" y="1" width="1" height="12" fill="#a0a0a0"/><rect x="0" y="11" width="14" height="2" fill="#a0a0a0"/><path d="M6 10 L4 8 L4 6 L6 4" stroke="#2020f0" stroke-width="1.5" fill="none" shape-rendering="geometricPrecision"/><path d="M4.5 3.5 L8.5 3.5 L8.5 7 Z" fill="#000090" shape-rendering="geometricPrecision"/><path d="M8 3 L10.5 5 L10.5 8 L9 9.5" stroke="#f02020" stroke-width="1.5" fill="none" shape-rendering="geometricPrecision"/><path d="M6.5 7 L6.5 10.5 L10 10.5 Z" fill="#900000" shape-rendering="geometricPrecision"/></svg>
<svg style="position:absolute;left:307px;top:230px" width="18" height="18" viewBox="0 0 18 18" shape-rendering="crispEdges"><path d="M1 1 H8 L11 4 V13 H1 Z" fill="#909090"/><path d="M2 2 H8 V4 H10 V12 H2 Z" fill="#ffffff"/><path d="M7 4 H14 L17 7 V16 H7 Z" fill="#909090"/><path d="M8 5 H14 V7 H16 V15 H8 Z" fill="#ffffff"/><path d="M3 8 L6.5 11.5 L11 11.5" stroke="#1c1ccc" stroke-width="2.6" fill="none" shape-rendering="geometricPrecision"/><path d="M10 7.5 L14.5 11.5 L10 15.5 Z" fill="#1c1ccc" shape-rendering="geometricPrecision"/></svg>
<div class="t" style="left:331px;top:233px;font:11px/13px 'Liberation Sans',sans-serif;color:#000;transform:scaleY(1.125);transform-origin:0 10px;">Перейти</div>
<svg style="position:absolute;left:378px;top:238px" width="5" height="3" viewBox="0 0 5 3" shape-rendering="crispEdges"><rect x="0" y="0" width="5" height="1" fill="#000"/><rect x="1" y="1" width="3" height="1" fill="#000"/><rect x="2" y="2" width="1" height="1" fill="#000"/></svg>
<div style="left:390px;top:230px;width:1px;height:18px;background:#c6c0b4;"></div>
<svg style="position:absolute;left:395px;top:231px" width="17" height="16" viewBox="0 0 17 16" shape-rendering="crispEdges"><path d="M3.5 0.5 L12.5 0.5 L15.5 3.5 L15.5 12.5 L12.5 15.5 L3.5 15.5 L0.5 12.5 L0.5 3.5 Z" fill="#ffffd8" stroke="#a0a0a0" stroke-width="1.2" shape-rendering="geometricPrecision"/><path d="M5.9 5.6 Q5.9 3.3 8 3.3 Q10.2 3.3 10.2 5.3 Q10.2 6.7 8.7 7.6 L8.1 9.4" stroke="#000090" stroke-width="2" fill="none" shape-rendering="geometricPrecision"/><rect x="7" y="11" width="2" height="2" fill="#000090"/></svg>
<div class="t" style="left:195px;top:264px;font:11px/13px 'Liberation Sans',sans-serif;color:#000;transform:scaleY(1.125);transform-origin:0 10px;">Наименование:</div>
<div style="left:281px;top:260px;width:304px;height:19px;background:#a19a8c;"></div>
<div style="left:282px;top:261px;width:302px;height:17px;background:#ffffff;"></div>
<div class="t" style="left:284px;top:264px;font:11px/13px 'Liberation Sans',sans-serif;color:#000;transform:scaleY(1.125);transform-origin:0 10px;">Размер</div>
<div class="t" style="left:596px;top:264px;font:11px/13px 'Liberation Sans',sans-serif;color:#000;transform:scaleY(1.125);transform-origin:0 10px;">Код:</div>
<div style="left:629px;top:260px;width:40px;height:19px;background:#a19a8c;"></div>
<div style="left:630px;top:261px;width:38px;height:17px;background:#ffffff;"></div>
<div class="t" style="left:632px;top:264px;font:11px/13px 'Liberation Sans',sans-serif;color:#000;transform:scaleY(1.125);transform-origin:0 10px;">00116</div>
<div class="t" style="left:195px;top:288px;font:11px/13px 'Liberation Sans',sans-serif;color:#000;transform:scaleY(1.125);transform-origin:0 10px;">Назначение:</div>
<div style="left:281px;top:284px;width:388px;height:19px;background:#a19a8c;"></div>
<div style="left:282px;top:285px;width:386px;height:17px;background:#ffffff;"></div>
<div class="t" style="left:284px;top:288px;font:11px/13px 'Liberation Sans',sans-serif;color:#000;transform:scaleY(1.125);transform-origin:0 10px;">Справочник "Характеристики ТМЦ"</div>
<div style="left:640px;top:284px;width:15px;height:19px;background:#a19a8c;"></div>
<div style="left:641px;top:285px;width:13px;height:17px;background:#e2dcd1;"></div>
<div style="left:644px;top:295px;width:1px;height:2px;background:#000;"></div>
<div style="left:647px;top:295px;width:1px;height:2px;background:#000;"></div>
<div style="left:650px;top:295px;width:1px;height:2px;background:#000;"></div>
<div style="left:654px;top:284px;width:15px;height:19px;background:#a19a8c;"></div>
<div style="left:655px;top:285px;width:13px;height:17px;background:#e2dcd1;"></div>
<svg style="position:absolute;left:658px;top:291px" width="7" height="6" viewBox="0 0 7 6" shape-rendering="crispEdges"><path d="M0.5 0.5 L6.5 5.5 M6.5 0.5 L0.5 5.5" stroke="#000" stroke-width="1.7" shape-rendering="geometricPrecision"/></svg>
<div class="t" style="left:195px;top:312px;font:11px/13px 'Liberation Sans',sans-serif;color:#000;transform:scaleY(1.125);transform-origin:0 10px;">Тип значений:</div>
<div style="left:281px;top:308px;width:388px;height:19px;background:#a19a8c;"></div>
<div style="left:282px;top:309px;width:386px;height:17px;background:#ffffff;"></div>
<div class="t" style="left:284px;top:312px;font:11px/13px 'Liberation Sans',sans-serif;color:#000;transform:scaleY(1.125);transform-origin:0 10px;">Справочник ссылка: Значения свойств объектов</div>
<div style="left:654px;top:308px;width:15px;height:19px;background:#a19a8c;"></div>
<div style="left:655px;top:309px;width:13px;height:17px;background:#e2dcd1;"></div>
<div style="left:658px;top:319px;width:1px;height:2px;background:#000;"></div>
<div style="left:661px;top:319px;width:1px;height:2px;background:#000;"></div>
<div style="left:664px;top:319px;width:1px;height:2px;background:#000;"></div>
<div style="left:195px;top:354px;width:474px;height:1px;background:#aaa395;"></div>
<div style="left:195px;top:354px;width:1px;height:109px;background:#aaa395;"></div>
<div style="left:668px;top:354px;width:1px;height:109px;background:#aaa395;"></div>
<div style="left:195px;top:338px;width:124px;height:16px;border:1px solid #aaa395;border-bottom:0;border-radius:2px 2px 0 0;background:#e3ddd3"></div>
<div style="left:319px;top:337px;width:110px;height:18px;border:1px solid #aaa395;border-bottom:0;border-radius:2px 2px 0 0;background:#ebe5db"></div>
<div style="left:320px;top:338px;width:108px;height:1px;background:#f8f5ee;"></div>
<div style="left:320px;top:338px;width:1px;height:17px;background:#f8f5ee;"></div>
<div class="t" style="left:201px;top:341px;font:11px/13px 'Liberation Sans',sans-serif;color:#000;transform:scaleY(1.125);transform-origin:0 10px;">Назначения свойства</div>
<div style="left:321px;top:339px;width:107px;height:18px;border:2px solid #000;border-radius:4px"></div>
<div class="t" style="left:325px;top:341px;font:11px/13px 'Liberation Sans',sans-serif;color:#000;transform:scaleY(1.125);transform-origin:0 10px;">Значения свойства</div>
<div class="t" style="left:207px;top:361px;font:11px/13px 'Liberation Sans',sans-serif;color:#000;transform:scaleY(1.125);transform-origin:0 10px;">Действия</div>
<svg style="position:absolute;left:259px;top:366px" width="5" height="3" viewBox="0 0 5 3" shape-rendering="crispEdges"><rect x="0" y="0" width="5" height="1" fill="#000"/><rect x="1" y="1" width="3" height="1" fill="#000"/><rect x="2" y="2" width="1" height="1" fill="#000"/></svg>
<div style="left:271px;top:358px;width:1px;height:18px;background:#c6c0b4;"></div>
<svg style="position:absolute;left:277px;top:359px" width="17" height="17" viewBox="0 0 17 17" shape-rendering="crispEdges"><rect x="6" y="1" width="10" height="3" fill="#b4b4ee"/><rect x="7" y="2" width="8" height="1" fill="#f4f4ff"/><rect x="6" y="3" width="10" height="1" fill="#9a9ad8"/><rect x="15" y="1" width="1" height="3" fill="#8c8cc8"/><rect x="6" y="4" width="10" height="3" fill="#b4b4ee"/><rect x="7" y="5" width="8" height="1" fill="#f4f4ff"/><rect x="6" y="6" width="10" height="1" fill="#9a9ad8"/><rect x="15" y="4" width="1" height="3" fill="#8c8cc8"/><rect x="6" y="10" width="10" height="3" fill="#b4b4ee"/><rect x="7" y="11" width="8" height="1" fill="#f4f4ff"/><rect x="6" y="12" width="10" height="1" fill="#9a9ad8"/><rect x="15" y="10" width="1" height="3" fill="#8c8cc8"/><rect x="6" y="13" width="10" height="3" fill="#b4b4ee"/><rect x="7" y="14" width="8" height="1" fill="#f4f4ff"/><rect x="6" y="15" width="10" height="1" fill="#9a9ad8"/><rect x="15" y="13" width="1" height="3" fill="#8c8cc8"/><rect x="3" y="7" width="10" height="3" fill="#b4b4ee"/><rect x="4" y="8" width="8" height="1" fill="#f4f4ff"/><rect x="3" y="9" width="10" height="1" fill="#1f5a94"/><rect x="12" y="7" width="1" height="3" fill="#1f5a94"/><path d="M3.5 -0.2 L4.5 2 L6.7 1 L5.6 3.5 L6.7 6 L4.5 5 L3.5 7.2 L2.5 5 L0.3 6 L1.4 3.5 L0.3 1 L2.5 2 Z" fill="#ffcc00" shape-rendering="geometricPrecision"/><circle cx="3.5" cy="3.5" r="2.4" fill="#ffe000" shape-rendering="geometricPrecision"/><circle cx="3.5" cy="3.5" r="1.3" fill="#ffffff" shape-rendering="geometricPrecision"/></svg>
<svg style="position:absolute;left:300px;top:359px" width="17" height="17" viewBox="0 0 17 17" shape-rendering="crispEdges"><rect x="6" y="1" width="10" height="3" fill="#b4b4ee"/><rect x="7" y="2" width="8" height="1" fill="#f4f4ff"/><rect x="6" y="3" width="10" height="1" fill="#9a9ad8"/><rect x="15" y="1" width="1" height="3" fill="#8c8cc8"/><rect x="3" y="4" width="10" height="3" fill="#b4b4ee"/><rect x="4" y="5" width="8" height="1" fill="#f4f4ff"/><rect x="3" y="6" width="10" height="1" fill="#1f5a94"/><rect x="12" y="4" width="1" height="3" fill="#1f5a94"/><rect x="6" y="7" width="10" height="3" fill="#b4b4ee"/><rect x="7" y="8" width="8" height="1" fill="#f4f4ff"/><rect x="6" y="9" width="10" height="1" fill="#9a9ad8"/><rect x="15" y="7" width="1" height="3" fill="#8c8cc8"/><rect x="3" y="10" width="10" height="3" fill="#b4b4ee"/><rect x="4" y="11" width="8" height="1" fill="#f4f4ff"/><rect x="3" y="12" width="10" height="1" fill="#1f5a94"/><rect x="12" y="10" width="1" height="3" fill="#1f5a94"/><rect x="6" y="13" width="10" height="3" fill="#b4b4ee"/><rect x="7" y="14" width="8" height="1" fill="#f4f4ff"/><rect x="6" y="15" width="10" height="1" fill="#9a9ad8"/><rect x="15" y="13" width="1" height="3" fill="#8c8cc8"/><rect x="0" y="3" width="9" height="2" fill="#00a010"/><rect x="3" y="0" width="2" height="9" fill="#00a010"/></svg>
<svg style="position:absolute;left:323px;top:359px" width="17" height="17" viewBox="0 0 17 17" shape-rendering="crispEdges"><rect x="3" y="1" width="10" height="3" fill="#b4b4ee"/><rect x="4" y="2" width="8" height="1" fill="#f4f4ff"/><rect x="3" y="3" width="10" height="1" fill="#9a9ad8"/><rect x="12" y="1" width="1" height="3" fill="#8c8cc8"/><rect x="3" y="4" width="10" height="3" fill="#b4b4ee"/><rect x="4" y="5" width="8" height="1" fill="#f4f4ff"/><rect x="3" y="6" width="10" height="1" fill="#9a9ad8"/><rect x="12" y="4" width="1" height="3" fill="#8c8cc8"/><rect x="3" y="10" width="10" height="3" fill="#b4b4ee"/><rect x="4" y="11" width="8" height="1" fill="#f4f4ff"/><rect x="3" y="12" width="10" height="1" fill="#9a9ad8"/><rect x="12" y="10" width="1" height="3" fill="#8c8cc8"/><rect x="3" y="13" width="10" height="3" fill="#b4b4ee"/><rect x="4" y="14" width="8" height="1" fill="#f4f4ff"/><rect x="3" y="15" width="10" height="1" fill="#9a9ad8"/><rect x="12" y="13" width="1" height="3" fill="#8c8cc8"/><rect x="0" y="7" width="10" height="3" fill="#b4b4ee"/><rect x="1" y="8" width="8" height="1" fill="#f4f4ff"/><rect x="0" y="9" width="10" height="1" fill="#1f5a94"/><rect x="9" y="7" width="1" height="3" fill="#1f5a94"/><path d="M7.5 7.5 L15 15" stroke="#104010" stroke-width="3.6" shape-rendering="geometricPrecision"/><path d="M8 8 L14.5 14.5" stroke="#20d020" stroke-width="2" shape-rendering="geometricPrecision"/><rect x="7" y="7" width="3" height="2" fill="#ffff00"/><rect x="7" y="7" width="1" height="1" fill="#000"/><rect x="14" y="14" width="2" height="2" fill="#ffff00"/><rect x="15" y="15" width="1" height="1" fill="#000"/></svg>
<svg style="position:absolute;left:346px;top:359px" width="18" height="17" viewBox="0 0 18 17" shape-rendering="crispEdges"><rect x="6" y="1" width="10" height="3" fill="#b4b4ee"/><rect x="7" y="2" width="8" height="1" fill="#f4f4ff"/><rect x="6" y="3" width="10" height="1" fill="#9a9ad8"/><rect x="15" y="1" width="1" height="3" fill="#8c8cc8"/><rect x="6" y="4" width="10" height="3" fill="#b4b4ee"/><rect x="7" y="5" width="8" height="1" fill="#f4f4ff"/><rect x="6" y="6" width="10" height="1" fill="#9a9ad8"/><rect x="15" y="4" width="1" height="3" fill="#8c8cc8"/><rect x="6" y="10" width="10" height="3" fill="#b4b4ee"/><rect x="7" y="11" width="8" height="1" fill="#f4f4ff"/><rect x="6" y="12" width="10" height="1" fill="#9a9ad8"/><rect x="15" y="10" width="1" height="3" fill="#8c8cc8"/><rect x="6" y="13" width="10" height="3" fill="#b4b4ee"/><rect x="7" y="14" width="8" height="1" fill="#f4f4ff"/><rect x="6" y="15" width="10" height="1" fill="#9a9ad8"/><rect x="15" y="13" width="1" height="3" fill="#8c8cc8"/><rect x="3" y="7" width="10" height="3" fill="#b4b4ee"/><rect x="4" y="8" width="8" height="1" fill="#f4f4ff"/><rect x="3" y="9" width="10" height="1" fill="#1f5a94"/><rect x="12" y="7" width="1" height="3" fill="#1f5a94"/><path d="M1.5 0.5 L7.5 6.5 M7.5 0.5 L1.5 6.5" stroke="#e02800" stroke-width="2.2" shape-rendering="geometricPrecision"/><rect x="9" y="8" width="8" height="8" fill="#5a5a30"/><rect x="10" y="9" width="6" height="6" fill="#ffff00"/><path d="M11 11.5 L12.6 13.5 L15 10" stroke="#808040" stroke-width="1.2" fill="none" shape-rendering="geometricPrecision"/></svg>
<svg style="position:absolute;left:369px;top:360px" width="17" height="15" viewBox="0 0 17 15" shape-rendering="crispEdges"><rect x="0" y="1" width="12" height="12" fill="#b4b4b4"/><rect x="2" y="2" width="8" height="4" fill="#e0e0e0"/><rect x="3" y="3" width="6" height="1" fill="#c8c8c8"/><rect x="2" y="8" width="7" height="5" fill="#989898"/><rect x="3" y="9" width="2" height="3" fill="#d0d0d0"/><path d="M8.6 8.6 h2.8 v5.8 h-2.8 z M13.6 8 v7 M13.6 11.5 l2.6 -3.5 M13.6 11.2 l2.6 3.8" stroke="#a8a8c8" stroke-width="1.2" fill="none" shape-rendering="geometricPrecision"/></svg>
<div style="left:391px;top:358px;width:1px;height:18px;background:#c6c0b4;"></div>
<svg style="position:absolute;left:397px;top:358px" width="17" height="17" viewBox="0 0 17 17" shape-rendering="crispEdges"><rect x="0" y="6" width="16" height="10" fill="#ffffff"/><rect x="1" y="7" width="2" height="1" fill="#8a8a8a"/><rect x="5" y="7" width="5" height="1" fill="#d8d8d8"/><rect x="1" y="9" width="2" height="1" fill="#8a8a8a"/><rect x="5" y="9" width="5" height="1" fill="#d8d8d8"/><rect x="1" y="11" width="2" height="1" fill="#8a8a8a"/><rect x="5" y="11" width="5" height="1" fill="#d8d8d8"/><rect x="1" y="13" width="2" height="1" fill="#8a8a8a"/><rect x="5" y="13" width="5" height="1" fill="#d8d8d8"/><rect x="1" y="15" width="2" height="1" fill="#8a8a8a"/><rect x="5" y="15" width="5" height="1" fill="#d8d8d8"/><path d="M0.5 0.5 H11.5 L7.5 4.5 V11.5 L5.5 12.5 L4.5 11.5 V4.5 Z" fill="#d8d8d8" stroke="#707070" stroke-width="1" shape-rendering="geometricPrecision"/><path d="M2.5 1.5 H9.5 L6.5 4.5 H5.5 Z" fill="#ffffff" shape-rendering="geometricPrecision"/><rect x="12" y="6" width="2" height="8" fill="#1a1a9a"/><path d="M10 12.5 H16 L13 16 Z" fill="#1a1a9a"/><rect x="11" y="1" width="1" height="1" fill="#1a1a9a"/><rect x="13" y="1" width="1" height="1" fill="#1a1a9a"/><rect x="12" y="2" width="1" height="1" fill="#1a1a9a"/><rect x="14" y="2" width="1" height="1" fill="#1a1a9a"/><rect x="11" y="3" width="1" height="1" fill="#1a1a9a"/><rect x="13" y="3" width="1" height="1" fill="#1a1a9a"/><rect x="12" y="4" width="1" height="1" fill="#1a1a9a"/><rect x="14" y="4" width="1" height="1" fill="#1a1a9a"/><rect x="11" y="5" width="1" height="1" fill="#1a1a9a"/><rect x="13" y="5" width="1" height="1" fill="#1a1a9a"/></svg>
<svg style="position:absolute;left:420px;top:358px" width="17" height="17" viewBox="0 0 17 17" shape-rendering="crispEdges"><path d="M0.5 0.5 H11.5 L7.5 4.5 V11.5 L5.5 12.5 L4.5 11.5 V4.5 Z" fill="#d8d8d8" stroke="#707070" stroke-width="1" shape-rendering="geometricPrecision"/><path d="M2.5 1.5 H9.5 L6.5 4.5 H5.5 Z" fill="#ffffff" shape-rendering="geometricPrecision"/><rect x="5" y="3" width="11" height="12" fill="#7c7c7c"/><rect x="6" y="5" width="9" height="9" fill="#ffffff"/><rect x="5" y="3" width="11" height="2" fill="#2898d8"/><rect x="11" y="6" width="3" height="3" fill="#1a1a90"/><rect x="12" y="7" width="1" height="1" fill="#ffffff"/><rect x="11" y="10" width="3" height="3" fill="#d8d0c0"/><rect x="7" y="7" width="2" height="1" fill="#c0b8a8"/><rect x="7" y="11" width="2" height="1" fill="#c0b8a8"/></svg>
<svg style="position:absolute;left:442px;top:358px" width="18" height="17" viewBox="0 0 18 17" shape-rendering="crispEdges"><rect x="1" y="1" width="8" height="11" fill="#c4c4c4"/><rect x="2" y="2" width="6" height="9" fill="#dcdcdc"/><rect x="4" y="4" width="8" height="11" fill="#c4c4c4"/><rect x="5" y="5" width="6" height="9" fill="#dcdcdc"/><rect x="7" y="5" width="8" height="11" fill="#a0a0c4"/><rect x="8" y="6" width="6" height="9" fill="#e0e4e8"/><rect x="9" y="8" width="4" height="1" fill="#80c0c0"/><rect x="9" y="10" width="4" height="1" fill="#80c0c0"/><rect x="9" y="12" width="4" height="1" fill="#80c0c0"/><path d="M5.5 0.5 H16.5 L12.5 4.5 V11.5 L10.5 12.5 L9.5 11.5 V4.5 Z" fill="#e0e0e0" stroke="#a0a0a0" stroke-width="1" shape-rendering="geometricPrecision"/><path d="M7.5 1.5 H14.5 L11.5 4.5 H10.5 Z" fill="#c0c0c0" shape-rendering="geometricPrecision"/></svg>
<svg style="position:absolute;left:461px;top:365px" width="5" height="3" viewBox="0 0 5 3" shape-rendering="crispEdges"><rect x="0" y="0" width="5" height="1" fill="#8a8a8a"/><rect x="1" y="1" width="3" height="1" fill="#8a8a8a"/><rect x="2" y="2" width="1" height="1" fill="#8a8a8a"/></svg>
<svg style="position:absolute;left:472px;top:358px" width="17" height="17" viewBox="0 0 17 17" shape-rendering="crispEdges"><path d="M0.5 0.5 H11.5 L7.5 4.5 V11.5 L5.5 12.5 L4.5 11.5 V4.5 Z" fill="#e4e2dc" stroke="#a8a8a8" stroke-width="1" shape-rendering="geometricPrecision"/><path d="M2.5 1.5 H9.5 L6.5 4.5 H5.5 Z" fill="#d0d0d0" shape-rendering="geometricPrecision"/><path d="M8.5 9 L14.5 15 M15 8.5 L8.5 15.5" stroke="#a08088" stroke-width="1.2" stroke-dasharray="1.2 0.6" shape-rendering="geometricPrecision"/></svg>
<div style="left:495px;top:358px;width:1px;height:18px;background:#c6c0b4;"></div>
<svg style="position:absolute;left:501px;top:358px" width="18" height="18" viewBox="0 0 18 18" shape-rendering="crispEdges"><rect x="1" y="1" width="13" height="15" fill="#ffffff"/><rect x="14" y="2" width="1" height="15" fill="#a8a8a8"/><rect x="2" y="16" width="13" height="1" fill="#a8a8a8"/><rect x="2" y="2" width="2" height="1" fill="#30a0e0"/><rect x="5" y="2" width="5" height="1" fill="#dcdcdc"/><rect x="2" y="4" width="2" height="1" fill="#30a0e0"/><rect x="5" y="4" width="5" height="1" fill="#dcdcdc"/><rect x="2" y="6" width="2" height="1" fill="#30a0e0"/><rect x="5" y="6" width="5" height="1" fill="#dcdcdc"/><rect x="2" y="8" width="2" height="1" fill="#30a0e0"/><rect x="5" y="8" width="5" height="1" fill="#dcdcdc"/><rect x="2" y="10" width="2" height="1" fill="#30a0e0"/><rect x="5" y="10" width="5" height="1" fill="#dcdcdc"/><rect x="2" y="12" width="2" height="1" fill="#30a0e0"/><rect x="5" y="12" width="5" height="1" fill="#dcdcdc"/><rect x="2" y="14" width="2" height="1" fill="#30a0e0"/><rect x="5" y="14" width="5" height="1" fill="#dcdcdc"/><path d="M9 6 L6.5 8.5 L6.5 11.5 L9.5 14.5" stroke="#1a1aff" stroke-width="1.3" fill="none" shape-rendering="geometricPrecision"/><path d="M7 3 L11 3 L11 7 Z" fill="#0a0a90" shape-rendering="geometricPrecision"/><path d="M12 3 L15 6 L15 10 L13 12.5" stroke="#ff1a1a" stroke-width="1.3" fill="none" shape-rendering="geometricPrecision"/><path d="M10 11 L10 15 L14 15 Z" fill="#900000" shape-rendering="geometricPrecision"/></svg>
<div style="left:202px;top:379px;width:461px;height:84px;background:#8b8579;"></div>
<div style="left:203px;top:380px;width:459px;height:84px;background:#ffffff;"></div>
<div style="left:647px;top:380px;width:15px;height:83px;background:#fbf4e8;"></div>
<div style="left:649px;top:381px;width:12px;height:12px;background:#d2ccc0;"></div>
<div style="left:650px;top:382px;width:10px;height:10px;background:#e0dbd0;"></div>
<svg style="position:absolute;left:650px;top:383px" width="9" height="6" viewBox="0 0 9 6" shape-rendering="crispEdges"><path d="M1 5 L4.5 1.5 L8 5" stroke="#000" stroke-width="1.4" fill="none" shape-rendering="geometricPrecision"/></svg>
<div style="left:203px;top:380px;width:444px;height:14px;background:#e2dcd1;"></div>
<div style="left:235px;top:380px;width:412px;height:14px;background:#bbb4a7;"></div>
<div style="left:203px;top:394px;width:444px;height:1px;background:#a39c8e;"></div>
<div style="left:234px;top:380px;width:1px;height:66px;background:#a39c8e;"></div>
<div class="t" style="left:236px;top:381px;font:11px/13px 'Liberation Sans',sans-serif;color:#000;transform:scaleY(1.125);transform-origin:0 10px;">Наименование</div>
<svg style="position:absolute;left:634px;top:385px" width="5" height="3" viewBox="0 0 5 3" shape-rendering="crispEdges"><rect x="0" y="0" width="5" height="1" fill="#000"/><rect x="1" y="1" width="3" height="1" fill="#000"/><rect x="2" y="2" width="1" height="1" fill="#000"/></svg>
<div style="left:203px;top:411px;width:444px;height:1px;background:#a39c8e;"></div>
<div style="left:235px;top:395px;width:412px;height:16px;background:#000080;"></div>
<svg style="position:absolute;left:235px;top:395px" width="412" height="16" viewBox="0 0 412 16" shape-rendering="crispEdges"><rect x="0.5" y="0.5" width="411" height="15" fill="none" stroke="#f0f060" stroke-width="1" stroke-dasharray="1 1"/></svg>
<svg style="position:absolute;left:209px;top:401px" width="12" height="10" viewBox="0 0 12 10" shape-rendering="crispEdges"><rect x="1" y="1" width="8" height="3" fill="#b8b8b8"/><rect x="0" y="0" width="8" height="3" fill="#3a78e0"/><rect x="0" y="0" width="8" height="1" fill="#80aaf8"/></svg>
<div class="t" style="left:237px;top:397px;font:11px/13px 'Liberation Sans',sans-serif;color:#fff;transform:scaleY(1.125);transform-origin:0 10px;">36</div>
<div style="left:203px;top:428px;width:444px;height:1px;background:#a39c8e;"></div>
<svg style="position:absolute;left:209px;top:418px" width="12" height="10" viewBox="0 0 12 10" shape-rendering="crispEdges"><rect x="1" y="1" width="8" height="3" fill="#b8b8b8"/><rect x="0" y="0" width="8" height="3" fill="#3a78e0"/><rect x="0" y="0" width="8" height="1" fill="#80aaf8"/></svg>
<div class="t" style="left:237px;top:414px;font:11px/13px 'Liberation Sans',sans-serif;color:#000;transform:scaleY(1.125);transform-origin:0 10px;">37</div>
<div style="left:203px;top:445px;width:444px;height:1px;background:#a39c8e;"></div>
<svg style="position:absolute;left:209px;top:435px" width="12" height="10" viewBox="0 0 12 10" shape-rendering="crispEdges"><rect x="1" y="1" width="8" height="3" fill="#b8b8b8"/><rect x="0" y="0" width="8" height="3" fill="#3a78e0"/><rect x="0" y="0" width="8" height="1" fill="#80aaf8"/></svg>
<div class="t" style="left:237px;top:431px;font:11px/13px 'Liberation Sans',sans-serif;color:#000;transform:scaleY(1.125);transform-origin:0 10px;">38</div>
</body></html>
